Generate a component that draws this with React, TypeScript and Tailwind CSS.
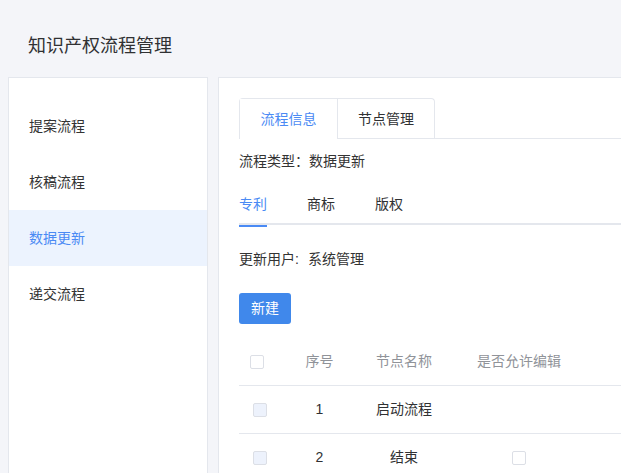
import { useState } from 'react';

const menus = ['提案流程', '核稿流程', '数据更新', '递交流程'];

const nodes = [
  { no: 1, name: '启动流程', editable: false },
  { no: 2, name: '结束', editable: true },
];

function Box({ disabled }: { disabled?: boolean }) {
  return (
    <span
      className={`inline-block w-[14px] h-[14px] rounded-[2px] border border-[#dcdfe6] align-middle ${
        disabled ? 'bg-[#edf2fc]' : 'bg-white'
      }`}
    />
  );
}

export default function App() {
  const [menu, setMenu] = useState(2);
  const [tab, setTab] = useState(0);
  const [sub, setSub] = useState(0);

  return (
    <div className="w-[621px] h-[473px] overflow-hidden bg-[#f4f5f9] text-[14px] text-[#333] font-['Liberation_Sans','Noto_Sans_CJK_SC',sans-serif]">
      {/* HEADER */}
      <div className="h-[77px] pl-[28px] pt-[34px]">
        <h1 className="text-[18px] leading-[24px] text-[#303133]">知识产权流程管理</h1>
      </div>

      <div className="flex gap-[10px] pl-[8px]">
        {/* SIDEBAR */}
        <div className="w-[200px] h-[500px] shrink-0 bg-white border border-[#e4e7ed] pt-[20px]">
          {menus.map((m, i) => (
            <div
              key={m}
              onClick={() => setMenu(i)}
              className={`h-[56px] leading-[56px] pl-[20px] cursor-pointer ${
                i === menu ? 'bg-[#ecf3fe] text-[#4a8af4]' : 'text-[#333]'
              }`}
            >
              {m}
            </div>
          ))}
        </div>

        {/* MAIN */}
        <div className="w-[640px] h-[500px] shrink-0 bg-white border border-[#e4e7ed] p-[20px]">
          {/* CARD TABS */}
          <div className="flex border-b border-[#e4e7ed]">
            <div className="flex border border-b-0 border-[#e4e7ed] rounded-t-[4px] -mb-px">
              {['流程信息', '节点管理'].map((t, i) => (
                <div
                  key={t}
                  onClick={() => setTab(i)}
                  className={`h-[40px] leading-[40px] px-[20px] w-[97px] text-center cursor-pointer ${
                    i > 0 ? 'border-l border-[#e4e7ed]' : ''
                  } ${
                    i === tab
                      ? 'text-[#4a8af4] bg-white border-b border-b-white'
                      : 'text-[#303133] border-b border-b-[#e4e7ed]'
                  }`}
                >
                  {t}
                </div>
              ))}
            </div>
          </div>

          <div className="mt-[11px] leading-[22px]">流程类型：数据更新</div>

          {/* SUB TABS */}
          <div className="mt-[13px] relative flex h-[40px] border-b-2 border-[#e4e7ed]">
            {['专利', '商标', '版权'].map((t, i) => (
              <div
                key={t}
                onClick={() => setSub(i)}
                className={`relative h-[40px] leading-[38px] cursor-pointer ${i === 0 ? 'pr-[20px]' : 'px-[20px]'} ${
                  i === sub ? 'text-[#4a8af4]' : 'text-[#303133]'
                }`}
              >
                {t}
                {i === sub && (
                  <span
                    className={`absolute bottom-[-2px] h-[2px] bg-[#4a8af4] ${
                      i === 0 ? 'left-0 right-[20px]' : 'left-[20px] right-[20px]'
                    }`}
                  />
                )}
              </div>
            ))}
          </div>

          <div className="mt-[23px] flex leading-[22px]">
            <span className="w-[69px]">更新用户:</span>
            <span>系统管理</span>
          </div>

          <button className="mt-[23px] block w-[52px] h-[31px] rounded-[3px] bg-[#4088eb] text-white text-[14px]">
            新建
          </button>

          {/* TABLE */}
          <div className="mt-[14px]">
            <div className="flex h-[48px] items-center border-b border-[#e4e7ed] text-[#909399]">
              <div className="w-[40px] pl-[11px] flex items-center">
                <Box />
              </div>
              <div className="w-[81px] text-center">序号</div>
              <div className="w-[88px] text-center">节点名称</div>
              <div className="w-[142px] text-center">是否允许编辑</div>
            </div>
            {nodes.map((n) => (
              <div key={n.no} className="flex h-[48px] items-center border-b border-[#e4e7ed] text-[#303133]">
                <div className="w-[40px] flex justify-center items-center pl-[2px]">
                  <Box disabled />
                </div>
                <div className="w-[81px] text-center">{n.no}</div>
                <div className="w-[88px] text-center">{n.name}</div>
                <div className="w-[142px] flex justify-center items-center">
                  {n.editable && <Box />}
                </div>
              </div>
            ))}
          </div>
        </div>
      </div>
    </div>
  );
}
